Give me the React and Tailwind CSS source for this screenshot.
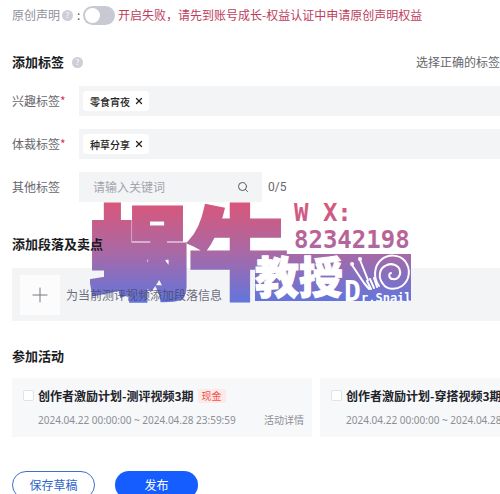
import React from "react";
import { Plus, Search, X } from "lucide-react";

const tagFields = [
  { id: "interest", label: "兴趣标签", tag: "零食宵夜" },
  { id: "genre", label: "体裁标签", tag: "种草分享" },
];

const activities = [
  { id: "review", title: "创作者激励计划-测评视频3期", badge: "现金" },
  { id: "outfit", title: "创作者激励计划-穿搭视频3期", badge: "现金" },
];

function HelpDot() {
  return (
    <span className="flex h-[11px] w-[11px] items-center justify-center rounded-full bg-[#cdced6] text-[8px] leading-none text-white">
      ?
    </span>
  );
}

function SectionTitle({ children }) {
  return <h2 className="text-[13px] leading-5 font-bold text-[#1b1b22]">{children}</h2>;
}

function TagField({ field }) {
  return (
    <div className="flex items-center">
      <span className="w-[67px] shrink-0 text-[12px] text-[#66666c]">
        {field.label}
        <span className="text-[#d8345f]">*</span>
      </span>
      <div className="flex h-[30px] grow items-center bg-[#f3f4f5] pl-1">
        <span className="flex h-5 items-center gap-1 rounded-sm bg-white pr-[5px] pl-[7px] text-[10px] font-medium text-[#222]">
          {field.tag}
          <button type="button" aria-label={"移除" + field.tag} className="cursor-pointer">
            <X size={10} strokeWidth={3} />
          </button>
        </span>
      </div>
    </div>
  );
}

function ActivityCard({ item }) {
  return (
    <div className="flex h-[59px] w-[300px] shrink-0 flex-col justify-center gap-2 bg-[#f6f8f9] pr-2 pl-[11px]">
      <div className="flex items-center gap-1">
        <input
          type="checkbox"
          id={item.id}
          className="h-[11px] w-[11px] shrink-0 appearance-none rounded-xs border border-[#e2e3e8] bg-white checked:bg-[#165dff]"
        />
        <label htmlFor={item.id} className="text-[12px] leading-4 font-bold whitespace-nowrap text-[#22222a]">
          {item.title}
        </label>
        <span className="shrink-0 rounded-xs bg-[#fde9e7] px-1 text-[10px] leading-[14px] text-[#f0524f]">
          {item.badge}
        </span>
      </div>
      <div className="flex items-center justify-between pl-[15px] text-[10px] leading-4 text-[#8d8f96]">
        <span className="font-['Noto_Sans',sans-serif] whitespace-nowrap">2024.04.22 00:00:00 ~ 2024.04.28 23:59:59</span>
        <a href="#detail" className="shrink-0">
          活动详情
        </a>
      </div>
    </div>
  );
}

function SnailMark() {
  return (
    <svg
      viewBox="0 0 324 104"
      className="pointer-events-none absolute top-[200px] left-[90px] h-[104px] w-[324px]"
      aria-hidden="true"
    >
      <defs>
        <linearGradient id="fade" gradientUnits="userSpaceOnUse" x1="0" y1="2" x2="0" y2="102">
          <stop offset="0" stopColor="#d9567a" />
          <stop offset="0.5" stopColor="#a969a5" />
          <stop offset="1" stopColor="#6375dc" />
        </linearGradient>
        <clipPath id="panel">
          <rect x="165" y="54" width="156" height="47" />
        </clipPath>
      </defs>
      <g fill="url(#fade)">
        <text
          x="0"
          y="90"
          fontFamily="Noto Sans CJK SC, sans-serif"
          fontSize="99"
          fontWeight="900"
          stroke="url(#fade)"
          strokeWidth="5"
        >
          蜗牛
        </text>
        <g fontFamily="DejaVu Sans Mono, monospace" fontSize="24" fontWeight="700">
          <text x="204" y="21">W X:</text>
          <text x="204" y="48">82342198</text>
        </g>
        <rect x="165" y="54" width="156" height="47" />
      </g>
      <g clipPath="url(#panel)" fill="#fff">
        <text
          x="165"
          y="94"
          fontFamily="Noto Sans CJK SC, sans-serif"
          fontSize="44"
          fontWeight="900"
          stroke="#fff"
          strokeWidth="1"
        >
          教授
        </text>
        <g fontFamily="DejaVu Sans Mono, monospace" fontWeight="700">
          <text x="254" y="101" fontSize="28">
            D
          </text>
          <text x="271" y="102" fontSize="12">
            r.Snail
          </text>
        </g>
        <g fill="none" stroke="#fff" strokeLinecap="round" strokeWidth="2">
          <path d="M289 86c-6-8-5-20 2-26 7-6 18-6 24 1 6 8 5 19-3 25-6 4-15 4-19-2-5-6-4-15 2-18 6-4 14-1 15 5 1 5-3 9-7 8-4 0-5-5-2-6" />
          <path d="M262 65l12 18M270 60l8 20M274 83l5 6M277 81l4 8M280 79l4 9M284 78l3 9" />
        </g>
        <circle cx="262" cy="64" r="2" />
        <circle cx="270" cy="59" r="2" />
      </g>
    </svg>
  );
}

export default function App() {
  return (
    <main className="relative h-screen overflow-hidden bg-white pl-3 font-['Noto_Sans_CJK_SC',sans-serif] text-[12px]">
      <div className="flex h-[30px] items-center">
        <label htmlFor="original" className="text-[#8f8f99]">
          原创声明
        </label>
        <span className="ml-[2px] flex w-[21px] items-center gap-1 text-[#55555c]">
          <HelpDot />:
        </span>
        <input
          type="checkbox"
          role="switch"
          id="original"
          className="h-[19px] w-8 shrink-0 appearance-none rounded-full bg-[#c9c9d3] before:m-[2px] before:block before:h-[15px] before:w-[15px] before:rounded-full before:bg-white"
        />
        <span className="ml-[3px] whitespace-nowrap text-[#bd3d5e]">
          开启失败，请先到账号成长-权益认证中申请原创声明权益
        </span>
      </div>

      <div className="mt-[22px] flex items-center gap-2">
        <SectionTitle>添加标签</SectionTitle>
        <HelpDot />
        <span className="ml-auto w-[84px] overflow-hidden whitespace-nowrap text-[#66666c]">选择正确的标签可以</span>
      </div>

      <div className="mt-[14px] flex flex-col gap-[13px]">
        {tagFields.map((field) => (
          <TagField key={field.id} field={field} />
        ))}
        <div className="flex items-center">
          <label htmlFor="keyword" className="w-[67px] text-[#66666c]">
            其他标签
          </label>
          <div className="flex h-[30px] w-[183px] items-center bg-[#f3f4f6] pr-[13px] pl-[14px]">
            <input
              id="keyword"
              type="text"
              placeholder="请输入关键词"
              className="w-full min-w-0 bg-transparent text-[12px] outline-none placeholder:text-[#a2a4ab]"
            />
            <Search size={12} className="shrink-0 text-[#55565c]" />
          </div>
          <span className="ml-[6px] font-[Roboto,sans-serif] text-[12px] text-[#66666c]">0/5</span>
        </div>
      </div>

      <div className="mt-8">
        <div className="relative z-10">
          <SectionTitle>添加段落及卖点</SectionTitle>
        </div>
        <div className="mt-[14px] flex h-[53px] items-center gap-[6px] bg-[#f3f4f6] pl-2">
          <button
            type="button"
            aria-label="添加段落"
            className="flex h-10 w-10 cursor-pointer items-center justify-center bg-[#fcfcfd] text-[#77787e]"
          >
            <Plus size={24} strokeWidth={1} />
          </button>
          <span className="relative z-10 text-[#45465c]/80">为当前测评视频添加段落信息</span>
        </div>
      </div>

      <div className="mt-[25px]">
        <SectionTitle>参加活动</SectionTitle>
        <div className="mt-3 flex gap-2 overflow-hidden">
          {activities.map((item) => (
            <ActivityCard key={item.id} item={item} />
          ))}
        </div>
      </div>

      <div className="mt-[34px] flex gap-5">
        <button type="button" className="h-7 w-[83px] cursor-pointer rounded-full border border-[#3f70cf] text-[#2f63cc]">
          保存草稿
        </button>
        <button type="button" className="h-7 w-[83px] cursor-pointer rounded-full bg-[#165dff] text-white">
          发布
        </button>
      </div>

      <SnailMark />
    </main>
  );
}
